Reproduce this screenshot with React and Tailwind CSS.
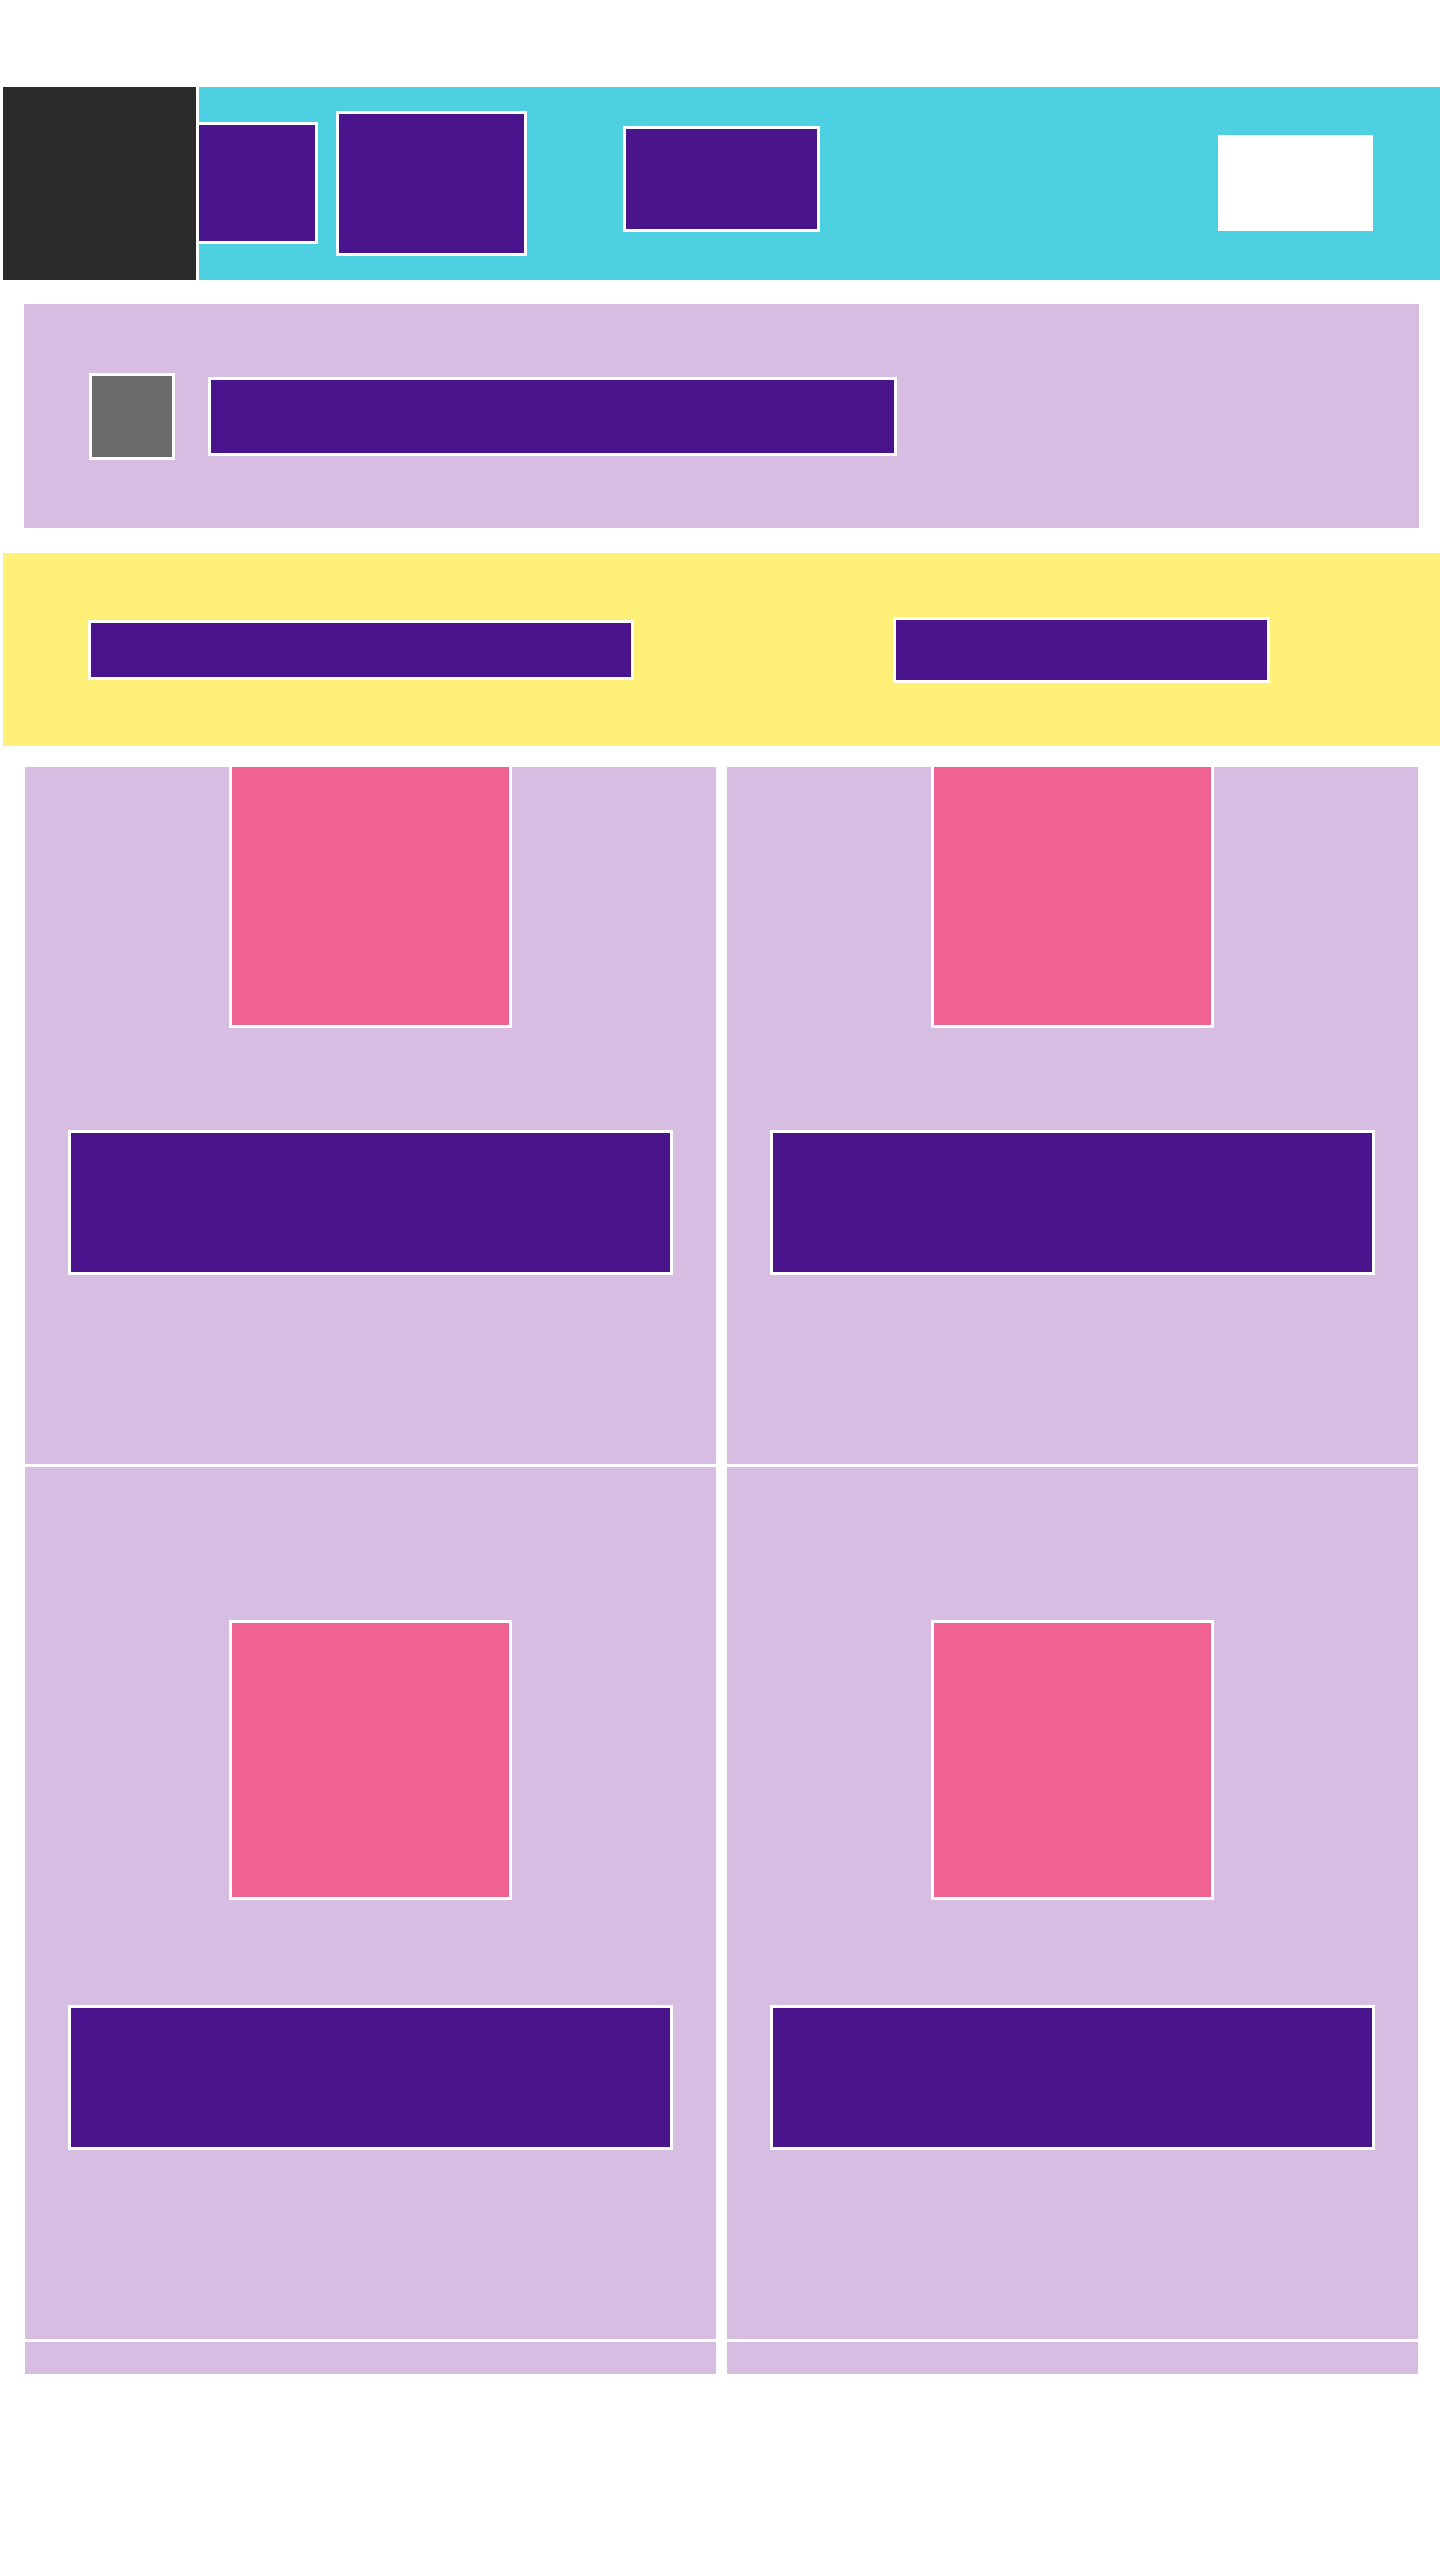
function Tile({ pinkTop = 0, clipped = false }) {
  return (
    <div className="flex flex-col items-center bg-[#d7bde2]" style={{ paddingTop: pinkTop }}>
      <div
        className={
          clipped
            ? 'h-[261px] w-[283px] border-x-[3px] border-b-[3px] border-white bg-[#f06292]'
            : 'h-[280px] w-[283px] border-[3px] border-white bg-[#f06292]'
        }
      />
      <div className={clipped ? 'mt-[102px] h-[145px] w-[605px] border-[3px] border-white bg-[#4a148c]' : 'mt-[105px] h-[145px] w-[605px] border-[3px] border-white bg-[#4a148c]'} />
      <div className="h-[189px]" />
    </div>
  );
}

export default function App() {
  return (
    <div className="min-h-[2560px] bg-white pt-[87px]">
      {/* header */}
      <header className="ml-[3px] flex h-[193px]">
        <div className="h-[193px] w-[193px] shrink-0 bg-[#2b2b2b]" />
        <div className="ml-[3px] flex flex-1 items-start bg-[#4dd0e1]">
          <div className="mt-[35px] h-[122px] w-[119px] border-y-[3px] border-r-[3px] border-white bg-[#4a148c]" />
          <div className="ml-[18px] mt-[24px] h-[145px] w-[191px] border-[3px] border-white bg-[#4a148c]" />
          <div className="ml-[96px] mt-[39px] h-[106px] w-[197px] border-[3px] border-white bg-[#4a148c]" />
          <div className="ml-[398px] mt-[48px] h-[96px] w-[155px] bg-white" />
        </div>
      </header>

      {/* banner */}
      <section className="ml-[24px] mt-[24px] flex h-[224px] w-[1395px] items-center bg-[#d7bde2] pl-[65px]">
        <div className="h-[87px] w-[86px] border-[3px] border-white bg-[#6b6b6b]" />
        <div className="ml-[33px] h-[79px] w-[689px] border-[3px] border-white bg-[#4a148c]" />
      </section>

      {/* toolbar */}
      <section className="ml-[3px] mt-[25px] flex h-[193px] items-center bg-[#fff078] pl-[85px]">
        <div className="h-[60px] w-[546px] border-[3px] border-white bg-[#4a148c]" />
        <div className="ml-[259px] h-[66px] w-[377px] border-[3px] border-white bg-[#4a148c]" />
      </section>

      {/* grid */}
      <main className="ml-[25px] mt-[21px] grid w-[1393px] grid-cols-2 gap-x-[11px] gap-y-[3px]">
        <Tile clipped />
        <Tile clipped />
        <Tile pinkTop={153} />
        <Tile pinkTop={153} />
        <div className="h-[32px] bg-[#d7bde2]" />
        <div className="h-[32px] bg-[#d7bde2]" />
      </main>
    </div>
  );
}
